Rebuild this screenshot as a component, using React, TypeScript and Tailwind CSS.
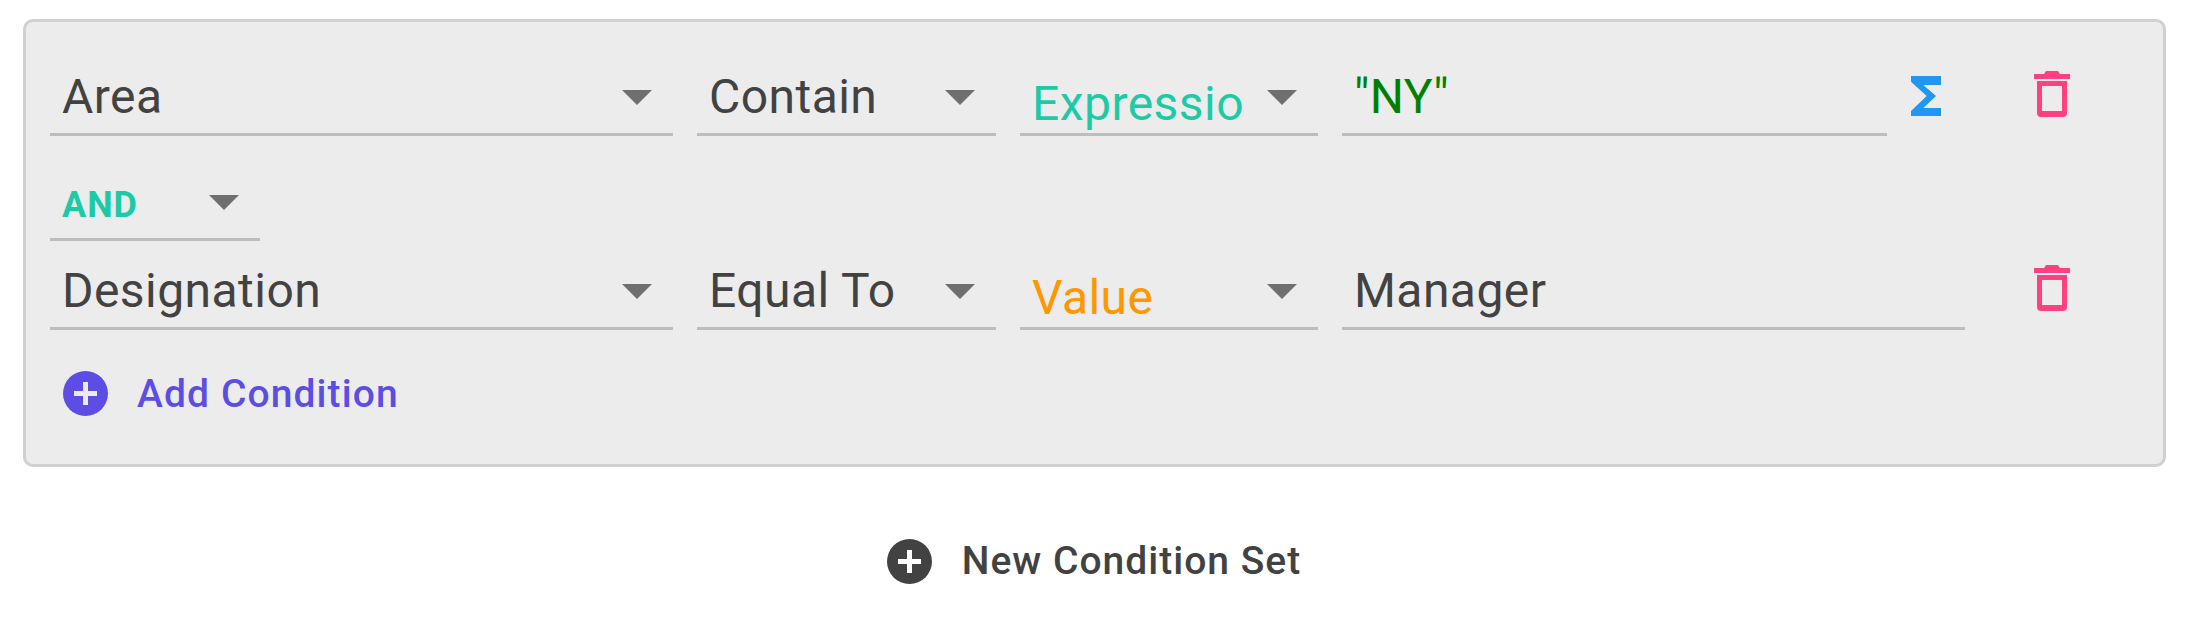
import React from "react";

const Arrow = () => (
  <svg width="30" height="15" viewBox="0 0 30 15" className="shrink-0">
    <path d="M0 0H30L15 15Z" fill="#6f6f6f" />
  </svg>
);

const Trash = () => (
  <svg width="36" height="46" viewBox="0 0 36 46" className="shrink-0">
    <path d="M0 3H10L12 0H24L26 3H36V8H0Z" fill="#ff4081" />
    <path fillRule="evenodd" d="M3 10H33V42A4 4 0 0 1 29 46H7A4 4 0 0 1 3 42ZM8 15V40H28V15Z" fill="#ff4081" />
  </svg>
);

const Sigma = () => (
  <svg width="30" height="40" viewBox="0 0 30 40" className="shrink-0">
    <path d="M0 0H30V9H12.3L25 20L12.3 32H30V40H0V35L15.7 20L0 5.7Z" fill="#2196f3" />
  </svg>
);

const PlusCircle = ({ color, plus }: { color: string; plus: string }) => (
  <svg width="45" height="45" viewBox="0 0 45 45" className="shrink-0">
    <circle cx="22.5" cy="22.5" r="22.5" fill={color} />
    <path d="M20 11H25V20H34V25H25V34H20V25H11V20H20Z" fill={plus} />
  </svg>
);

function Select({ label, width, color, low, narrow }: { label: string; width: string; color: string; low?: boolean; narrow?: boolean }) {
  return (
    <div className={`flex h-[75px] ${width} shrink-0 items-start border-b-[3px] border-[#bdbdbd] pl-[12px]`}>
      <div
        className={`h-[72px] flex-1 overflow-hidden whitespace-nowrap text-[48px] leading-[54px] tracking-[0.45px] ${low ? "pt-[16px]" : "pt-[9px]"} ${color} ${narrow ? "mr-[21px]" : ""}`}
      >
        {label}
      </div>
      <div className="mr-[21px] mt-[29px]">
        <Arrow />
      </div>
    </div>
  );
}

function TextField({ label, width, color }: { label: string; width: string; color: string }) {
  return (
    <div className={`h-[75px] ${width} shrink-0 border-b-[3px] border-[#bdbdbd] pl-[12px] pt-[9px] text-[48px] leading-[54px] tracking-[0.45px] ${color}`}>
      {label}
    </div>
  );
}

export default function App() {
  return (
    <div className="h-[618px] w-[2190px] bg-white pl-[23px] pt-[19px] font-['Roboto',sans-serif]">
      <div className="h-[448px] w-[2143px] rounded-[10px] border-[3px] border-[#d0d0d0] bg-[#ececec] pl-[24px] pt-[39px]">
        <div className="flex items-start gap-[24px]">
          <Select label="Area" width="w-[623px]" color="text-[#424242]" />
          <Select label="Contain" width="w-[299px]" color="text-[#424242]" />
          <Select label="Expression" width="w-[298px]" color="text-[#1dcaa6]" low narrow />
          <TextField label={'"NY"'} width="w-[545px]" color="text-[#008000]" />
          <div className="mt-[15px]">
            <Sigma />
          </div>
          <div className="ml-[69px] mt-[10px]">
            <Trash />
          </div>
        </div>
        <div className="mt-[30px] flex h-[75px] w-[210px] items-start border-b-[3px] border-[#bdbdbd] pl-[12px]">
          <div className="flex-1 pt-[18px] text-[36px] font-bold leading-[42px] tracking-[1px] text-[#1dcaa6]">AND</div>
          <div className="mr-[21px] mt-[29px]">
            <Arrow />
          </div>
        </div>
        <div className="mt-[14px] flex items-start gap-[24px]">
          <Select label="Designation" width="w-[623px]" color="text-[#424242]" />
          <Select label="Equal To" width="w-[299px]" color="text-[#424242]" />
          <Select label="Value" width="w-[298px]" color="text-[#ff9800]" low />
          <TextField label="Manager" width="w-[623px]" color="text-[#424242]" />
          <div className="ml-[45px] mt-[10px]">
            <Trash />
          </div>
        </div>
        <div className="ml-[13px] mt-[40px] flex items-center gap-[29px]">
          <PlusCircle color="#5c4ee5" plus="#ececec" />
          <span className="pt-[2px] text-[39px] font-medium leading-[45px] tracking-[1.1px] text-[#5c4ee5]">Add Condition</span>
        </div>
      </div>
      <div className="mt-[72px] flex w-[2142px] items-center justify-center gap-[30px]">
        <PlusCircle color="#424242" plus="#ffffff" />
        <span className="text-[39px] font-medium leading-[45px] tracking-[1px] text-[#424242]">New Condition Set</span>
      </div>
    </div>
  );
}
